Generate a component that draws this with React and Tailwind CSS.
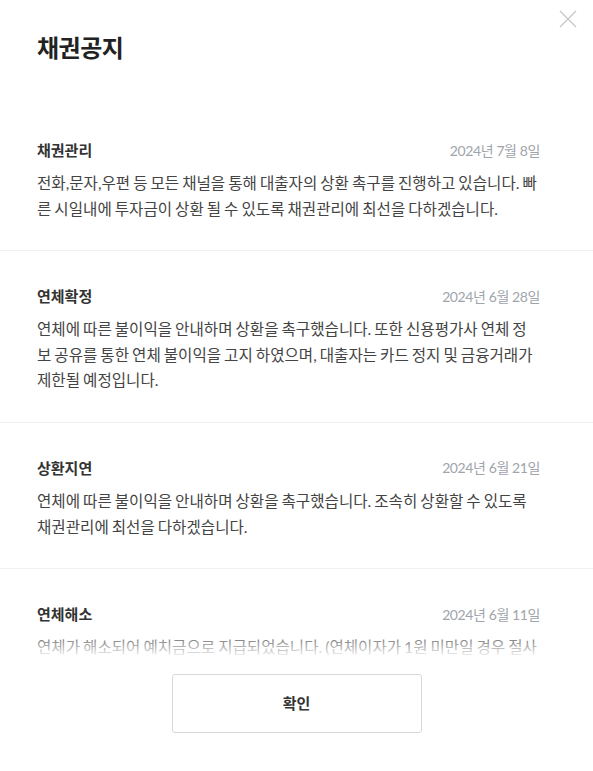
const notices = [
  {
    title: "채권관리",
    date: "2024년 7월 8일",
    lines: [
      "전화,문자,우편 등 모든 채널을 통해 대출자의 상환 촉구를 진행하고 있습니다. 빠",
      "른 시일내에 투자금이 상환 될 수 있도록 채권관리에 최선을 다하겠습니다.",
    ],
  },
  {
    title: "연체확정",
    date: "2024년 6월 28일",
    lines: [
      "연체에 따른 불이익을 안내하며 상환을 촉구했습니다. 또한 신용평가사 연체 정",
      "보 공유를 통한 연체 불이익을 고지 하였으며, 대출자는 카드 정지 및 금융거래가",
      "제한될 예정입니다.",
    ],
  },
  {
    title: "상환지연",
    date: "2024년 6월 21일",
    lines: [
      "연체에 따른 불이익을 안내하며 상환을 촉구했습니다. 조속히 상환할 수 있도록",
      "채권관리에 최선을 다하겠습니다.",
    ],
  },
  {
    title: "연체해소",
    date: "2024년 6월 11일",
    lines: [
      "연체가 해소되어 예치금으로 지급되었습니다. (연체이자가 1원 미만일 경우 절사",
      "되어 지급되지 않을 수 있습니다.)",
    ],
  },
];

const kr = "font-['Lato','Noto_Sans_CJK_KR',sans-serif]";

function NoticeItem({ item }) {
  return (
    <div className="border-b border-[#f0f0f0] pl-[37px] pr-[53px] pt-[34px] pb-[28px]">
      <div className="flex items-center justify-between h-[22px]">
        <h3 className="text-[15px] font-bold text-[#333]">{item.title}</h3>
        <span className="text-[14px] text-[#a0a4ab] tracking-[-0.4px]">{item.date}</span>
      </div>
      <p className="mt-[10px] text-[15.6px] leading-[25.6px] text-[#444] [word-spacing:-1px]">
        {item.lines.map((line) => (
          <span key={line} className="block whitespace-nowrap">{line}</span>
        ))}
      </p>
    </div>
  );
}

export default function App() {
  return (
    <div className={`${kr} relative w-[593px] h-[771px] bg-white flex flex-col overflow-hidden`}>
      <button type="button" className="absolute top-[10px] right-[16px] text-[#c9c9c9]">
        <svg width="18" height="18" viewBox="0 0 18 18" fill="none" stroke="currentColor" strokeWidth="1.4">
          <path d="M1 1L17 17M17 1L1 17" />
        </svg>
      </button>

      {/* Header */}
      <div className="h-[105px] pl-[37px] pt-[33px] shrink-0">
        <h2 className="text-[24px] leading-[30px] font-bold text-[#222] tracking-[-0.5px]">채권공지</h2>
      </div>

      {/* List */}
      <div className="relative flex-1 overflow-hidden">
        {notices.map((item) => (
          <NoticeItem key={item.title} item={item} />
        ))}
        <div className="absolute left-0 right-0 bottom-0 h-[28px] bg-gradient-to-b from-white/0 to-white" />
      </div>

      {/* Footer */}
      <div className="shrink-0 flex justify-center pt-[16px] pb-[38px]">
        <button type="button"
          className="w-[250px] h-[59px] border border-[#d5d8dd] rounded-[3px] bg-white text-[15px] font-bold text-[#333]">
          확인
        </button>
      </div>
    </div>
  );
}
